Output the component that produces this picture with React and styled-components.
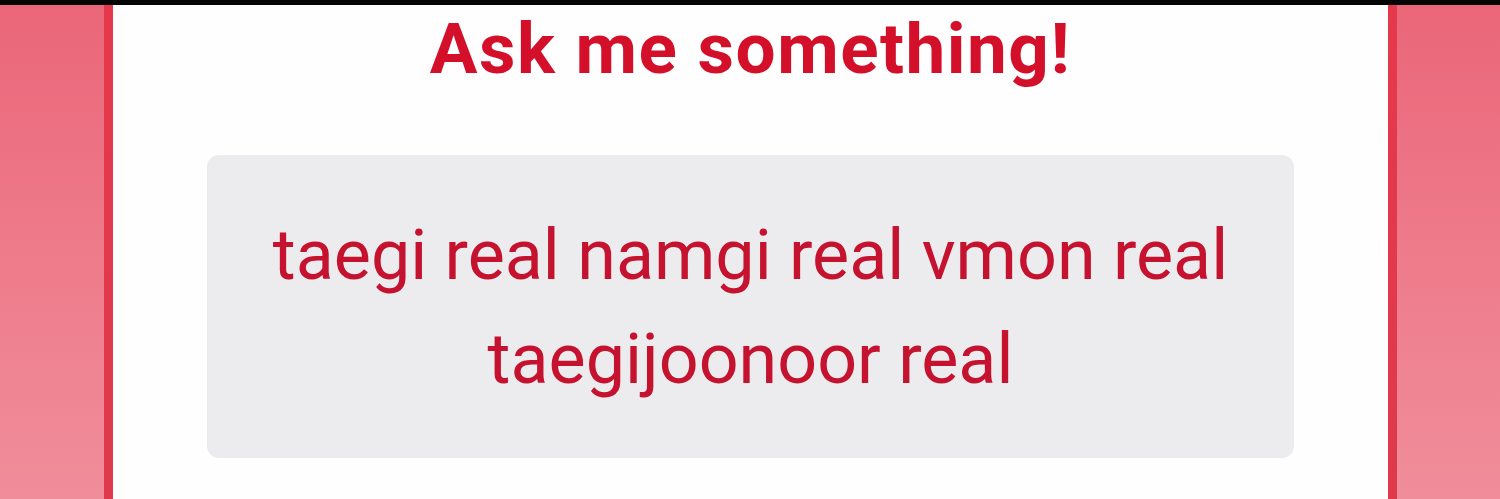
import React from "react";
import styled, { createGlobalStyle } from "styled-components";

const Global = createGlobalStyle`
  html, body { margin: 0; padding: 0; }
  body { background: #000; font-family: Roboto, "Liberation Sans", sans-serif; }
`;

const Page = styled.div`
  width: 1500px;
  height: 499px;
  display: flex;
  flex-direction: column;
  background: #000;
  overflow: hidden;
`;

const TopBar = styled.div`
  height: 5px;
  flex: none;
  background: #050505;
`;

const Row = styled.div`
  flex: 1;
  display: flex;
`;

const Side = styled.div`
  width: ${(p) => p.$w}px;
  flex: none;
  background: linear-gradient(180deg, #ea6679 0%, #ee7b8a 50%, #f08d9a 100%);
  display: flex;
  justify-content: ${(p) => (p.$left ? "flex-end" : "flex-start")};
`;

const Rule = styled.div`
  width: 9px;
  background: linear-gradient(180deg, #e6384b 0%, #de3a4c 100%);
`;

const Card = styled.div`
  flex: 1;
  background: #fefefe;
  display: flex;
  flex-direction: column;
  align-items: center;
`;

const Title = styled.h1`
  margin: 3px 0 0;
  font-family: Roboto, "Liberation Sans", sans-serif;
  font-weight: 700;
  font-size: 71px;
  line-height: 82px;
  color: #d30f2a;
  letter-spacing: 1.5px;
`;

const Bubble = styled.div`
  margin-top: 65px;
  width: 1087px;
  height: 303px;
  box-sizing: border-box;
  background: #ececee;
  border-radius: 12px;
  display: flex;
  align-items: center;
  justify-content: center;
`;

const Question = styled.p`
  margin: 0;
  text-align: center;
  font-family: Roboto, "Liberation Sans", sans-serif;
  font-weight: 400;
  font-size: 70px;
  line-height: 104px;
  color: #c4122f;
`;

export default function App() {
  return (
    <Page>
      <Global />
      <TopBar />
      <Row>
        <Side $w={113} $left>
          <Rule />
        </Side>
        <Card>
          <Title>Ask me something!</Title>
          <Bubble>
            <Question>
              taegi real namgi real vmon real
              <br />
              taegijoonoor real
            </Question>
          </Bubble>
        </Card>
        <Side $w={112}>
          <Rule />
        </Side>
      </Row>
    </Page>
  );
}
